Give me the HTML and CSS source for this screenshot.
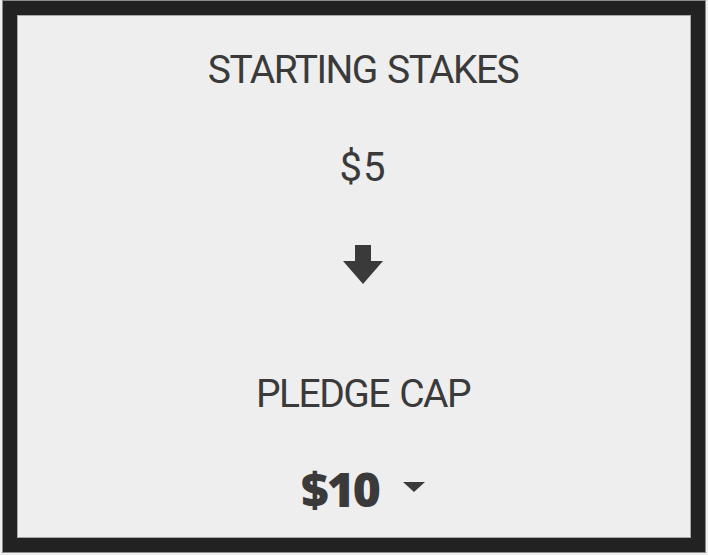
FILE: index.html
```html
<!DOCTYPE html>
<html lang="en">
<head>
    <meta charset="UTF-8">
    <meta name="viewport" content="width=device-width, initial-scale=1.0">
    <title>Pledge</title>
    <link rel="stylesheet" href="styles.css">
</head>
<body>

    <div class="frame">
        <div class="panel">
            <h2 class="label">STARTING STAKES</h2>
            <div class="stake">$5</div>

            <!-- pil ned -->
            <svg class="arrow" width="40" height="39" viewBox="0 0 40 39">
                <rect x="12" y="0" width="16" height="17"></rect>
                <polygon points="0,16 40,16 20,39"></polygon>
            </svg>

            <h2 class="label label-cap">PLEDGE CAP</h2>
            <div class="cap-select">
                <span class="cap-value">$10</span>
                <svg class="caret" width="22" height="10" viewBox="0 0 22 10">
                    <polygon points="0,0 22,0 11,10"></polygon>
                </svg>
            </div>
        </div>
    </div>

</body>
</html>
```

FILE: styles.css
```css
/* Grundstil */
body {
    margin: 0;
    background-color: #eeeeee;
    font-family: 'Roboto', 'Liberation Sans', sans-serif;
    color: #3a3a3a;
}

.frame {
    box-sizing: border-box;
    width: 704px;
    height: 553px;
    margin-left: 2px;
    padding: 14px;
    border: 1px solid #8c8c8c;
    background-color: #222222;
    display: flex;
}

.panel {
    flex: 1;
    display: flex;
    flex-direction: column;
    align-items: center;
    padding: 30px 0 0 18px;
    border: 1px solid #a8a8a8;
    background-color: #eeeeee;
}

.label {
    margin: 0;
    font-size: 39px;
    font-weight: 400;
    line-height: 48px;
    letter-spacing: -1.5px;
    word-spacing: 2px;
}

.stake {
    margin-top: 50px;
    font-size: 40px;
    line-height: 48px;
    letter-spacing: 1px;
}

.arrow {
    display: block;
    margin-top: 53px;
    fill: #3a3a3a;
}

.label-cap {
    margin-top: 86px;
}

.cap-select {
    margin-top: 41px;
    display: flex;
    align-items: center;
    gap: 24px;
}

.cap-value {
    font-family: 'Open Sans', 'Roboto', sans-serif;
    font-size: 48px;
    font-weight: 800;
    line-height: 59px;
    letter-spacing: -2px;
}

.caret {
    display: block;
    margin-top: -3px;
    fill: #3a3a3a;
}
```
